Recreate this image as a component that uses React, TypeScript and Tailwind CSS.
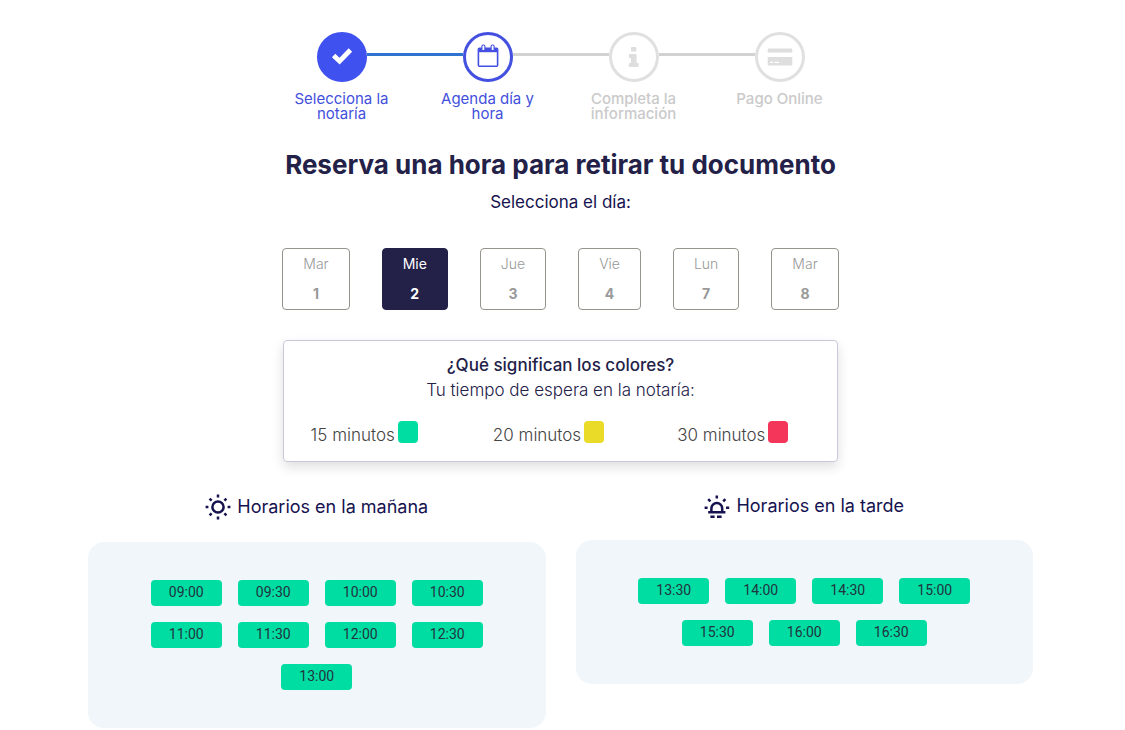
import { useState } from "react";
import type { ReactNode } from "react";
import clsx from "clsx";

const days = [
  { name: "Mar", date: 1 },
  { name: "Mie", date: 2 },
  { name: "Jue", date: 3 },
  { name: "Vie", date: 4 },
  { name: "Lun", date: 7 },
  { name: "Mar", date: 8 },
];

const legend = [
  { label: "15 minutos", color: "bg-[#00dda2]" },
  { label: "20 minutos", color: "bg-[#e9db27]" },
  { label: "30 minutos", color: "bg-[#f4365a]" },
];

const morning = ["09:00", "09:30", "10:00", "10:30", "11:00", "11:30", "12:00", "12:30", "13:00"];
const afternoon = ["13:30", "14:00", "14:30", "15:00", "15:30", "16:00", "16:30"];

function CheckIcon() {
  return (
    <svg width="22" height="18" viewBox="0 0 22 18" fill="none" stroke="currentColor" strokeWidth="4.8" aria-hidden="true">
      <path d="M2.6 8.4 8.6 14.2 19.4 3" strokeLinejoin="miter" />
    </svg>
  );
}

function CalendarIcon() {
  return (
    <svg width="22" height="24" viewBox="0 0 22 24" fill="none" stroke="currentColor" aria-hidden="true">
      <rect x="1.4" y="4.2" width="19.2" height="18" rx="1" strokeWidth="1.6" />
      <path d="M1 4h20v4.2H1z" fill="currentColor" stroke="none" />
      <rect x="4.9" y="1" width="3" height="5.6" rx="1.2" fill="#fff" strokeWidth="1.1" />
      <rect x="14.1" y="1" width="3" height="5.6" rx="1.2" fill="#fff" strokeWidth="1.1" />
    </svg>
  );
}

function InfoIcon() {
  return (
    <svg width="12" height="20" viewBox="0 0 12 20" fill="currentColor" aria-hidden="true">
      <rect x="3" width="5.4" height="4.4" rx="1" />
      <path d="M1.6 7h6.2c.5 0 .8.3.8.8V16h1.3c.5 0 .8.3.8.8v2.4c0 .5-.3.8-.8.8H1.6c-.5 0-.8-.3-.8-.8v-2.4c0-.5.3-.8.8-.8h1.3v-5H1.6c-.5 0-.8-.3-.8-.8V7.8c0-.5.3-.8.8-.8z" />
    </svg>
  );
}

function CardIcon() {
  return (
    <svg width="26" height="18" viewBox="0 0 26 18" fill="currentColor" aria-hidden="true">
      <path d="M2 .4h22c.8 0 1.3.5 1.3 1.3v2.7H.7V1.7C.7.9 1.2.4 2 .4z" />
      <path d="M.7 9h24.6v7.2c0 .8-.5 1.3-1.3 1.3H2c-.8 0-1.3-.5-1.3-1.3z" />
      <path d="M3 14.4h3M7.5 14.4h4.6" stroke="#fff" strokeWidth="1.1" />
    </svg>
  );
}

function SunIcon() {
  return (
    <svg width="26" height="26" viewBox="0 0 26 26" fill="none" stroke="currentColor" strokeWidth="2.5" aria-hidden="true">
      <circle cx="13" cy="13" r="5.6" />
      <path d="M13 .6v2.8M13 22.6v2.8M.6 13h2.8M22.6 13h2.8M4.6 4.6l2 2M19.4 19.4l2 2M4.6 21.4l2-2M19.4 6.6l2-2" />
    </svg>
  );
}

function SunsetIcon() {
  return (
    <svg width="26" height="24" viewBox="0 0 26 24" fill="none" stroke="currentColor" strokeWidth="2.5" aria-hidden="true">
      <path d="M7.4 18v-3.6a5.4 5.4 0 0 1 10.8 0V18" />
      <path d="M4.2 18.2h17.2M6.4 22.7h4.2M13 22.7h4.6" />
      <path d="M12.8 1.4v3M.6 13.8h3M22 13.8h3.2M4.2 5.2l2.2 2.2M19.2 7.4l2.2-2.2" />
    </svg>
  );
}

type StepProps = {
  label: string;
  icon: ReactNode;
  circle: string;
  text: string;
  before: string;
  after: string;
};

const steps: StepProps[] = [
  {
    label: "Selecciona la notaría",
    icon: <CheckIcon />,
    circle: "border-[#3f51ef] bg-[#3f51ef] pb-0.5 text-white",
    text: "text-[#4350dc]",
    before: "bg-transparent",
    after: "bg-[#2f74d0]",
  },
  {
    label: "Agenda día y hora",
    icon: <CalendarIcon />,
    circle: "border-[#4350e0] pb-0.5 text-[#4350e0]",
    text: "text-[#4350dc]",
    before: "bg-[#2f74d0]",
    after: "bg-[#d2d2d2]",
  },
  {
    label: "Completa la información",
    icon: <InfoIcon />,
    circle: "border-[#e0e0e0] text-[#dedede]",
    text: "font-medium text-[#cacaca]",
    before: "bg-[#d2d2d2]",
    after: "bg-[#d2d2d2]",
  },
  {
    label: "Pago Online",
    icon: <CardIcon />,
    circle: "border-[#e0e0e0] text-[#dedede]",
    text: "font-medium text-[#cacaca]",
    before: "bg-[#d2d2d2]",
    after: "bg-transparent",
  },
];

function Step({ label, icon, circle, text, before, after }: StepProps) {
  return (
    <li className="flex w-[146px] flex-col items-center">
      <div className="flex w-full">
        <span className={clsx("mt-[21px] h-[3px] flex-1", before)} />
        <span className={clsx("flex size-[50px] items-center justify-center rounded-full border-3", circle)}>
          {icon}
        </span>
        <span className={clsx("mt-[21px] h-[3px] flex-1", after)} />
      </div>
      <p className={clsx("mt-[9px] w-[108px] text-center text-[15px] leading-[15px]", text)}>{label}</p>
    </li>
  );
}

type ScheduleProps = {
  title: string;
  icon: ReactNode;
  slots: string[];
};

function Schedule({ title, icon, slots }: ScheduleProps) {
  return (
    <section className="min-w-0 flex-1">
      <h2 className="flex items-center justify-center gap-1.5 text-[18px] leading-6 text-[#15124f]">
        {icon}
        {title}
      </h2>
      <div className="mt-[22px] flex flex-wrap justify-center gap-4 rounded-2xl bg-[#f0f6f9] px-10 py-[38px]">
        {slots.map((slot) => (
          <button
            key={slot}
            type="button"
            className="h-[26px] w-[71px] rounded bg-[#00dda2] pb-0.5 font-[Roboto,sans-serif] text-sm text-[#22333f]"
          >
            {slot}
          </button>
        ))}
      </div>
    </section>
  );
}

export default function App() {
  const [selected, setSelected] = useState(2);

  return (
    <main className="bg-white pt-8 pr-[92px] pb-0.5 pl-[88px] font-[Inter,sans-serif]">
      <ol className="flex justify-center">
        {steps.map((step) => (
          <Step key={step.label} {...step} />
        ))}
      </ol>

      <h1 className="mt-7 text-center text-[26px] leading-8 font-bold text-[#232148]">
        Reserva una hora para retirar tu documento
      </h1>
      <p className="mt-[9px] text-center text-[17px] leading-6 text-[#15124f]">Selecciona el día:</p>

      <div className="mt-[34px] flex justify-center gap-8">
        {days.map((day) => (
          <button
            key={day.date}
            type="button"
            aria-pressed={selected === day.date}
            onClick={() => setSelected(day.date)}
            className={clsx(
              "flex h-[62px] flex-col items-center gap-2.5 rounded border px-5 pt-[5px] text-sm leading-5",
              selected === day.date
                ? "border-[#232148] bg-[#232148] text-white"
                : "border-[#96948c] text-[#999999]"
            )}
          >
            <span className={selected === day.date ? "font-normal" : "font-light"}>{day.name}</span>
            <span className="font-bold">{day.date}</span>
          </button>
        ))}
      </div>

      <section className="mx-auto mt-[30px] h-[122px] max-w-[555px] rounded border border-[#c9c8da] pt-3 text-center shadow-[0_5px_12px_rgba(0,0,0,0.13)]">
        <h2 className="text-[17px] leading-[25px] font-medium text-[#232148]">¿Qué significan los colores?</h2>
        <p className="text-[17px] leading-[25px] font-light text-[#232148]">Tu tiempo de espera en la notaría:</p>
        <ul className="mt-[18px] grid grid-cols-3">
          {legend.map((item) => (
            <li key={item.label} className="flex justify-center gap-[3px] pr-6 text-[17px] leading-7 font-light text-[#444444]">
              {item.label}
              <span className={clsx("h-[22px] w-5 rounded", item.color)} />
            </li>
          ))}
        </ul>
      </section>

      <div className="mt-8 flex items-start gap-[30px]">
        <Schedule title="Horarios en la mañana" icon={<SunIcon />} slots={morning} />
        <Schedule title="Horarios en la tarde" icon={<SunsetIcon />} slots={afternoon} />
      </div>
    </main>
  );
}
